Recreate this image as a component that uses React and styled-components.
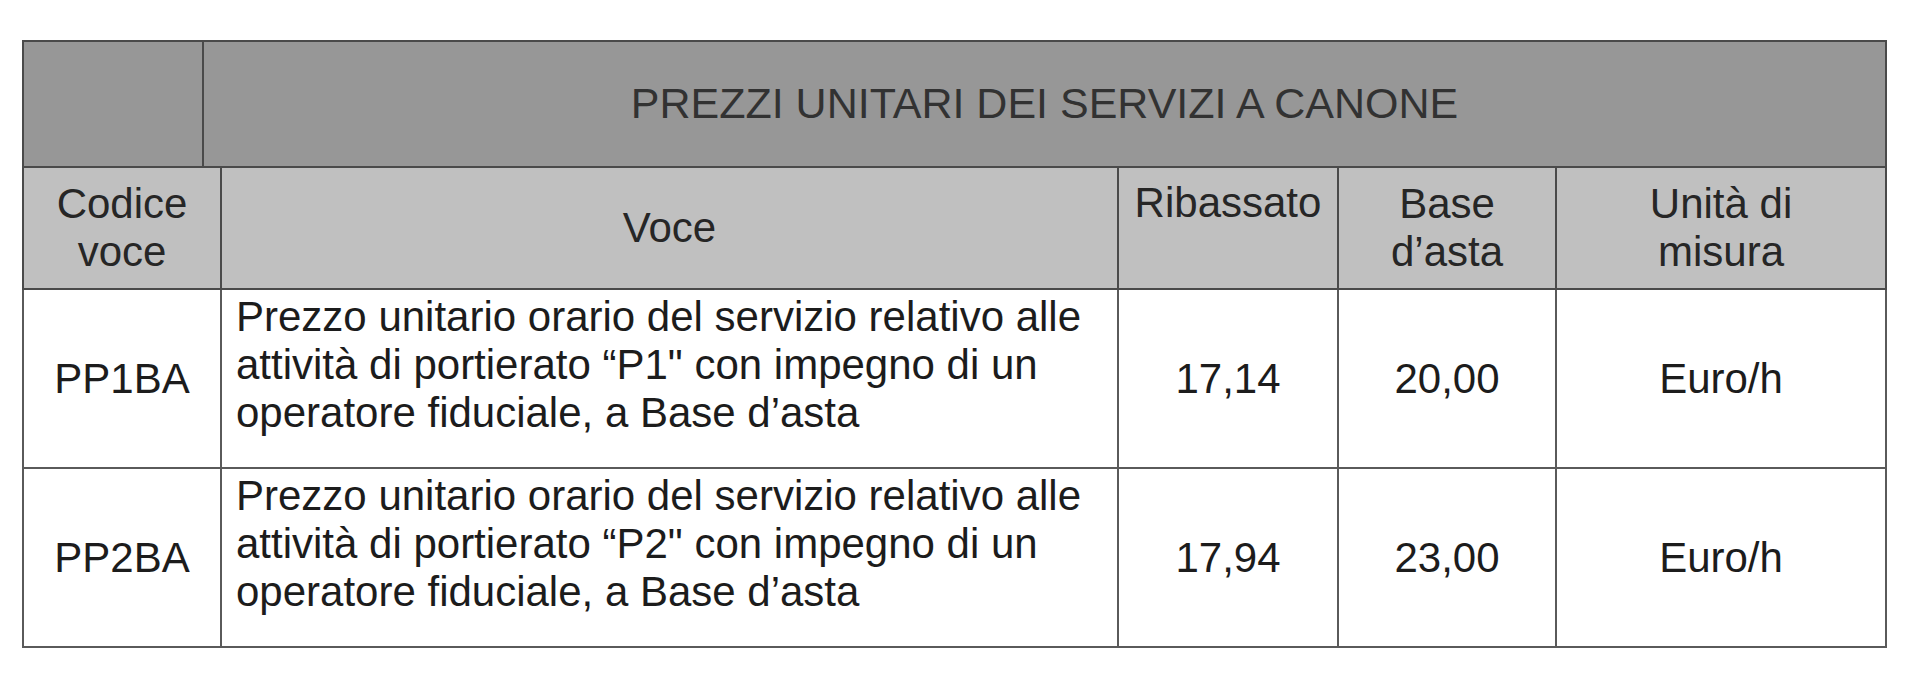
import React from 'react';
import styled, { createGlobalStyle } from 'styled-components';

const GlobalStyle = createGlobalStyle`
  html, body {
    margin: 0;
    padding: 0;
    background: #ffffff;
  }
  body {
    font-family: "Liberation Sans", Arial, sans-serif;
  }
`;

const rows = [
  {
    code: 'PP1BA',
    text: 'Prezzo unitario orario del servizio relativo alle attività di portierato “P1" con impegno di un operatore fiduciale, a Base d’asta',
    ribassato: '17,14',
    base: '20,00',
    unit: 'Euro/h',
  },
  {
    code: 'PP2BA',
    text: 'Prezzo unitario orario del servizio relativo alle attività di portierato “P2" con impegno di un operatore fiduciale, a Base d’asta',
    ribassato: '17,94',
    base: '23,00',
    unit: 'Euro/h',
  },
];

const App = () => {
  return (
    <Page>
      <GlobalStyle />
      <PriceTable>
        <colgroup>
          <col style={{ width: 198 }} />
          <col style={{ width: 897 }} />
          <col style={{ width: 220 }} />
          <col style={{ width: 218 }} />
          <col style={{ width: 330 }} />
        </colgroup>
        <tbody>
          <tr>
            <TitleCell colSpan={5}>
              <TitleRow>
                <TitleCorner />
                <Title>PREZZI UNITARI DEI SERVIZI A CANONE</Title>
              </TitleRow>
            </TitleCell>
          </tr>
          <HeadRow>
            <HeadCell>Codice<br />voce</HeadCell>
            <HeadCell>Voce</HeadCell>
            <HeadCell $top>Ribassato</HeadCell>
            <HeadCell>Base<br />d’asta</HeadCell>
            <HeadCell>Unità di<br />misura</HeadCell>
          </HeadRow>
          {rows.map((row) => (
            <BodyRow key={row.code}>
              <Cell>{row.code}</Cell>
              <TextCell>{row.text}</TextCell>
              <Cell>{row.ribassato}</Cell>
              <Cell>{row.base}</Cell>
              <Cell>{row.unit}</Cell>
            </BodyRow>
          ))}
        </tbody>
      </PriceTable>
    </Page>
  );
};

export default App;

const Page = styled.div`
  padding: 40px 0 0 22px;
  width: 1920px;
  height: 680px;
  box-sizing: border-box;
`;

const PriceTable = styled.table`
  border-collapse: collapse;
  table-layout: fixed;
  width: 1865px;
  font-size: 42px;
  color: #1c1c1c;
`;

const TitleCell = styled.td`
  padding: 0;
  height: 124px;
  border: 2px solid #4a4a4a;
  background: #979797;
`;

const TitleRow = styled.div`
  display: flex;
  height: 124px;
`;

const TitleCorner = styled.div`
  width: 178px;
  border-right: 2px solid #4a4a4a;
`;

const Title = styled.div`
  flex: 1;
  display: flex;
  align-items: center;
  justify-content: center;
  padding-bottom: 2px;
  font-size: 43px;
  color: #323232;
`;

const HeadRow = styled.tr`
  height: 122px;
`;

const HeadCell = styled.td`
  padding: ${(p) => (p.$top ? '11px 0 0' : '0')};
  vertical-align: ${(p) => (p.$top ? 'top' : 'middle')};
  text-align: center;
  background: #c0c0c0;
  border: 2px solid #4a4a4a;
  color: #262626;
`;

const BodyRow = styled.tr`
  height: 179px;
`;

const Cell = styled.td`
  padding: 0;
  text-align: center;
  vertical-align: middle;
  border: 2px solid #5a5a5a;
`;

const TextCell = styled.td`
  padding: 3px 14px 0 14px;
  text-align: left;
  vertical-align: top;
  border: 2px solid #5a5a5a;
`;
